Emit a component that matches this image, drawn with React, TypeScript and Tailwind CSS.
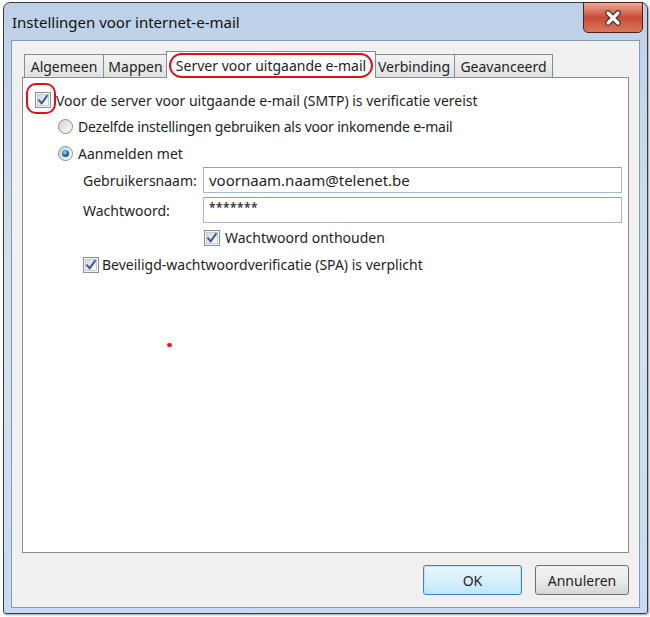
import React from "react";

function CheckBox({ checked = true }: { checked?: boolean }) {
  return (
    <svg width="16" height="16" viewBox="0 0 16 16" className="shrink-0">
      <defs>
        <linearGradient id="cbg" x1="0" y1="0" x2="1" y2="1">
          <stop offset="0" stopColor="#d5d5d5" />
          <stop offset="1" stopColor="#ffffff" />
        </linearGradient>
      </defs>
      <rect x="0.5" y="0.5" width="15" height="15" fill="#f4f4f4" stroke="#8e8f8f" />
      <rect x="2.5" y="2.5" width="11" height="11" fill="url(#cbg)" stroke="#c9c9c9" />
      {checked && (
        <path
          d="M4 8.2 L6.6 11.4 L12 3.8"
          fill="none"
          stroke="#3a5aa8"
          strokeWidth="2"
          strokeLinecap="round"
          strokeLinejoin="round"
        />
      )}
    </svg>
  );
}

function Radio({ checked = false }: { checked?: boolean }) {
  return (
    <svg width="15" height="15" viewBox="0 0 15 15" className="shrink-0">
      <defs>
        <linearGradient id="rbg" x1="0" y1="0" x2="1" y2="1">
          <stop offset="0" stopColor="#cfcfcf" />
          <stop offset="1" stopColor="#ffffff" />
        </linearGradient>
        <radialGradient id="rdot" cx="0.4" cy="0.35" r="0.7">
          <stop offset="0" stopColor="#a8dcfb" />
          <stop offset="0.5" stopColor="#2b7fc8" />
          <stop offset="1" stopColor="#0f3e78" />
        </radialGradient>
      </defs>
      <circle cx="7.5" cy="7.5" r="7" fill="url(#rbg)" stroke="#8e8f8f" />
      {checked && <circle cx="7.5" cy="7.5" r="3.6" fill="url(#rdot)" />}
    </svg>
  );
}

function Tab({ label, w }: { label: string; w: string }) {
  return (
    <div
      className={`${w} h-[23px] -ml-px first:ml-0 flex items-center justify-center border border-b-0 border-[#898c95] bg-gradient-to-b from-[#f3f3f3] to-[#e1e1e1] text-[14px] text-[#1e1e1e]`}
    >
      {label}
    </div>
  );
}

export default function App() {
  return (
    <div
      className="w-[650px] h-[617px] bg-white overflow-hidden relative"
      style={{ fontFamily: '"Noto Sans", "Open Sans", sans-serif' }}
    >
      <div className="ml-[3px] mt-[2px] w-[645px] h-[612px] border border-[#3c3c3c] rounded-t-[7px] rounded-b-[3px] bg-gradient-to-b from-[#bcd1e8] via-[#d3e2f2] to-[#c6dbf1] flex flex-col shadow-[1px_1px_2px_rgba(0,0,0,0.4)]">
        {/* title bar */}
        <div className="h-[37px] flex justify-between shrink-0">
          <div className="pl-[8px] pt-[8px] text-[15px] text-[#111]">Instellingen voor internet-e-mail</div>
          <div className="mr-[4px] -mt-px w-[60px] h-[31px] rounded-b-[5px] border border-[#4d2019] bg-gradient-to-b from-[#e9a996] via-[#c94a33] to-[#d9785c] flex items-center justify-center">
            <svg width="18" height="16" viewBox="0 0 18 16">
              <path d="M4 3 L14 13 M14 3 L4 13" stroke="#3a2a28" strokeWidth="5.5" strokeLinecap="round" />
              <path d="M4 3 L14 13 M14 3 L4 13" stroke="#ffffff" strokeWidth="3.2" strokeLinecap="round" />
            </svg>
          </div>
        </div>

        {/* client area */}
        <div className="mx-[7px] mb-[5px] flex-1 border border-[#8b97a6] bg-[#f0f0f0] flex flex-col pl-[10px] pr-[10px] pt-[9px]">
          {/* tabs */}
          <div className="h-[27px] flex items-end pl-[2px] relative">
            <Tab label="Algemeen" w="w-[80px]" />
            <Tab label="Mappen" w="w-[65px]" />
            <div className="w-[210px] h-[27px] -ml-[2px] -mr-[2px] flex items-start justify-center pt-[1px] border border-b-0 border-[#898c95] bg-white relative z-10 text-[14px] text-[#1e1e1e] -mb-px">
              <div className="h-[25px] w-[204px] rounded-full border-[2.5px] border-[#e0101a] flex items-center justify-center">
                Server voor uitgaande e-mail
              </div>
            </div>
            <Tab label="Verbinding" w="w-[82px]" />
            <Tab label="Geavanceerd" w="w-[99px]" />
          </div>

          {/* panel */}
          <div className="h-[476px] border border-[#898c95] bg-white relative text-[14px] text-[#1e1e1e] pt-[9px]">
            <div className="h-[26px] flex items-center pl-[12px] gap-[5px] relative">
              <div className="absolute left-[3px] -top-[4px] w-[30px] h-[31px] rounded-[10px] border-[2.5px] border-[#e0101a] z-10" />
              <CheckBox />
              <span>Voor de server voor uitgaande e-mail (SMTP) is verificatie vereist</span>
            </div>
            <div className="h-[27px] flex items-center pl-[35px] gap-[5px] tracking-[-0.2px]">
              <Radio />
              <span>Dezelfde instellingen gebruiken als voor inkomende e-mail</span>
            </div>
            <div className="h-[26px] flex items-center pl-[35px] gap-[5px]">
              <Radio checked />
              <span>Aanmelden met</span>
            </div>
            <div className="h-[26px] mt-[1px] flex items-center pl-[60px]">
              <span className="w-[120px]">Gebruikersnaam:</span>
              <div className="w-[419px] h-[26px] border border-[#a9b8cc] border-t-[#8fa2bb] bg-white flex items-center pl-[5px] text-[15px]">
                voornaam.naam@telenet.be
              </div>
            </div>
            <div className="h-[26px] mt-[4px] flex items-center pl-[60px]">
              <span className="w-[120px]">Wachtwoord:</span>
              <div className="w-[419px] h-[26px] border border-[#a9b8cc] border-t-[#8fa2bb] bg-white flex items-start pl-[5px] pt-[1px] text-[12px] font-bold tracking-[0.5px] text-[#444]">
                *******
              </div>
            </div>
            <div className="h-[29px] flex items-center pl-[181px] gap-[5px]">
              <CheckBox />
              <span>Wachtwoord onthouden</span>
            </div>
            <div className="h-[25px] flex items-center pl-[60px] gap-[3px]">
              <CheckBox />
              <span>Beveiligd-wachtwoordverificatie (SPA) is verplicht</span>
            </div>
            <div className="absolute left-[144px] top-[265px] w-[5px] h-[4px] rounded-full bg-[#ff1010]" />
          </div>

          {/* buttons */}
          <div className="flex justify-end gap-[13px] mt-[12px]">
            <button className="w-[99px] h-[30px] rounded-[3px] border border-[#3d85bd] bg-gradient-to-b from-[#eaf6fd] via-[#d9f0fc] to-[#bee6fd] shadow-[inset_0_0_0_1px_#c4e5f6] text-[14px] text-[#1e1e1e]">
              OK
            </button>
            <button className="w-[94px] h-[30px] rounded-[3px] border border-[#707070] bg-gradient-to-b from-[#f2f2f2] via-[#ebebeb] to-[#d6d6d6] text-[14px] text-[#1e1e1e]">
              Annuleren
            </button>
          </div>
        </div>
      </div>
    </div>
  );
}
